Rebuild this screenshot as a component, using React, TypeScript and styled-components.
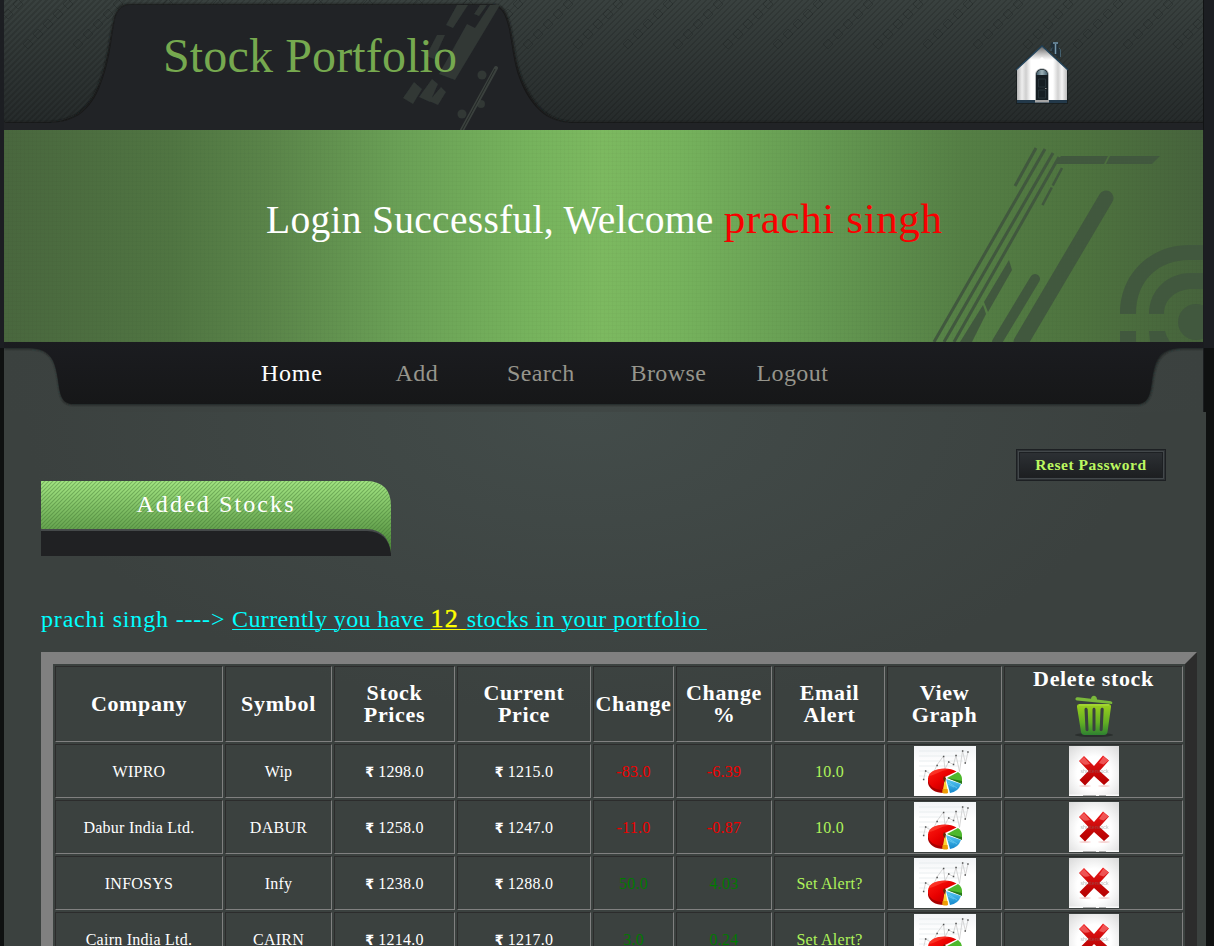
import React from "react";
import styled, { createGlobalStyle } from "styled-components";

const serif = `Georgia, "Liberation Serif", serif`;

const GlobalStyle = createGlobalStyle`
  html, body { margin: 0; height: 100%; background: #101212; overflow: hidden; }
  *, *::before, *::after { box-sizing: border-box; }
`;

const Page = styled.div`
  width: 1214px;
  height: 946px;
  overflow: hidden;
  padding-left: 4px;
  font-family: ${serif};
  color: #fff;
  background: linear-gradient(#1c1e22 0 348px, #0f1111 348px);
`;

const Header = styled.header`
  position: relative;
  width: 1200px;
  height: 130px;
  border-right: 1px solid #111314;
  background:
    repeating-linear-gradient(135deg, rgba(0, 0, 0, 0.13) 0 1.5px, transparent 1.5px 4.24px),
    linear-gradient(#39413f, #262b2b 122px);
`;

const HeaderArt = styled.svg`
  position: absolute;
  inset: 0;
`;

const HeaderRow = styled.div`
  position: relative;
  display: flex;
  justify-content: space-between;
  padding: 29px 130px 0 159px;
`;

const Title = styled.h1`
  margin: 0;
  font-size: 48px;
  font-weight: 400;
  line-height: 54px;
  letter-spacing: 0.15px;
  color: #76a94f;
`;

const HomeLink = styled.a`
  margin-top: 11px;
  height: 68px;
`;

const Banner = styled.section`
  position: relative;
  width: 1200px;
  height: 212px;
  padding: 60px 0 0 262px;
  border-right: 1px solid #1a1d1f;
  background:
    repeating-linear-gradient(90deg, rgba(0, 0, 0, 0.02) 0 1px, transparent 1px 4px),
    repeating-linear-gradient(0deg, rgba(0, 0, 0, 0.02) 0 1px, transparent 1px 4px),
    linear-gradient(90deg, #49673e 0, #507542 14%, #5a8449 22%, #6aa056 33%, #76b35d 44%, #7cb960 50%, #76b35d 56%, #659a52 68%, #557f45 80%, #4e733f 90%, #46633c 100%);
`;

const BannerArt = styled.svg`
  position: absolute;
  right: -1px;
  top: 0;
`;

const Welcome = styled.h2`
  position: relative;
  margin: 0;
  font-weight: 400;
  font-size: 39.5px;
  line-height: 58px;
  letter-spacing: 0.29px;
  white-space: pre;
`;

const UserName = styled.span`
  font-size: 43px;
  letter-spacing: 0.62px;
  color: #f80000;
`;

const NavBar = styled.nav`
  position: relative;
  width: 1200px;
  height: 70px;
  padding: 17px 0 0 257px;
  border-right: 1px solid #1a1d1f;
  background: linear-gradient(90deg, #3b413f, #404745 50%, #3b413f);
`;

const NavArt = styled.svg`
  position: absolute;
  inset: 0;
`;

const NavList = styled.ul`
  position: relative;
  display: grid;
  grid-template-columns: 134.5px 111.5px 123.5px 126px auto;
  margin: 0;
  padding: 0;
  list-style: none;
`;

const NavItem = styled.li<{ $active?: boolean }>`
  font-size: 24px;
  line-height: 28px;
  letter-spacing: ${(p) => (p.$active ? "0.75px" : "0.4px")};
  color: ${(p) => (p.$active ? "#fff" : "#96958c")};
`;

const Content = styled.main`
  width: 1202px;
  height: 534px;
  padding: 37px 0 0 37px;
  background: radial-gradient(ellipse 560px 300px at 580px 0, #434c4a, #3b413f);
`;

const ActionRow = styled.div`
  display: flex;
  justify-content: flex-end;
  padding-right: 40px;
`;

const ResetButton = styled.button`
  width: 150px;
  height: 32px;
  padding: 0;
  border: 1px solid #1d2023;
  outline: 1px solid #43484b;
  outline-offset: -3px;
  box-shadow: inset 0 0 0 1px #2e3235, inset 0 0 0 3px #1d2023;
  background: linear-gradient(#2e3236, #1b1d1f);
  color: #bcf860;
  font: bold 15.5px/28px ${serif};
  letter-spacing: 0.55px;
`;

const SectionTab = styled.h3`
  position: relative;
  width: 350px;
  height: 75px;
  margin: 0;
  padding-top: 9px;
  text-align: center;
  font-size: 24px;
  font-weight: 400;
  line-height: 28px;
  letter-spacing: 2.1px;
`;

const TabArt = styled.svg`
  position: absolute;
  inset: 0;
`;

const TabLabel = styled.span`
  position: relative;
`;

const Summary = styled.p`
  height: 29px;
  margin: 49px 0 18px;
  font-size: 24px;
  line-height: 29px;
  letter-spacing: 0.82px;
  color: #00ffff;
  white-space: pre;
`;

const SummaryLink = styled.span`
  letter-spacing: 0.38px;
  text-decoration: underline;
  text-decoration-thickness: 1px;
  text-underline-offset: 2px;
`;

const Count = styled.span`
  font-size: 26px;
  line-height: 20px;
  letter-spacing: 1.2px;
  color: #ffff00;
  text-decoration: underline;
  text-decoration-thickness: 1px;
  -webkit-text-stroke: 0.4px #ffff00;
`;

const StockTable = styled.table`
  width: 1156px;
  table-layout: fixed;
  border: 12px solid;
  border-color: #808080 #2c2c2c #2c2c2c #808080;
  border-collapse: separate;
  border-spacing: 2px;
`;

const cellBorder = `
  border: 1px solid;
  border-color: #2c2c2c #808080 #808080 #2c2c2c;
  text-align: center;
  vertical-align: middle;
`;

const HeadCell = styled.th`
  ${cellBorder}
  padding: 1px;
  height: 76px;
  font-size: 22px;
  line-height: 22px;
  letter-spacing: 0.65px;
`;

const DeleteHead = styled.div`
  display: flex;
  flex-direction: column;
  align-items: center;
  gap: 5px;
  height: 72px;
`;

const Cell = styled.td<{ $color?: string }>`
  ${cellBorder}
  padding: 3px 1px 1px;
  height: 54px;
  font-size: 16px;
  line-height: 18px;
  letter-spacing: 0.25px;
  color: ${(p) => p.$color || "#fff"};
`;

const PictureCell = styled.td`
  ${cellBorder}
  padding: 1px;
  height: 54px;

  svg { display: block; margin: 0 auto; }
`;

const Rupee = styled.span`
  font: 600 14px/16px "DejaVu Sans Condensed", "DejaVu Sans", sans-serif;
  letter-spacing: 0;
`;

const HouseIcon = () => (
  <svg width="64" height="68" viewBox="0 0 64 68">
    <defs>
      <linearGradient id="wall" x1="0" x2="1">
        <stop offset="0" stopColor="#b4b4b4" /><stop offset=".1" stopColor="#eee" />
        <stop offset=".18" stopColor="#cfcfcf" /><stop offset=".28" stopColor="#fff" />
        <stop offset=".72" stopColor="#fff" /><stop offset=".82" stopColor="#d2d2d2" />
        <stop offset=".9" stopColor="#f4f4f4" /><stop offset="1" stopColor="#bdbdbd" />
      </linearGradient>
      <linearGradient id="shade" x1="0" x2="0" y1="0" y2="1">
        <stop offset="0" stopColor="#222" stopOpacity=".75" /><stop offset=".4" stopColor="#555" stopOpacity="0" />
      </linearGradient>
      <linearGradient id="glass" x1="0" x2="1">
        <stop offset="0" stopColor="#3f5b69" /><stop offset=".5" stopColor="#9fb3ba" /><stop offset="1" stopColor="#3f5b69" />
      </linearGradient>
    </defs>
    <path d="M42 8c-1-3 0-6 2-6h4c2 1 2 3 1 5l2 4v8l-9-8z" fill="#202e37" />
    <path d="M44 3h5M46.500 4v10" stroke="#7598ad" strokeWidth="1.5" />
    <path d="M43.500 8q-2 1-1.500 3M50 8q2 1 1.500 4v5" fill="none" stroke="#44606f" />
    <path d="M7 29 33 5 59 29v35H7z" fill="#111719" opacity=".6" />
    <path d="M8 29 33 6l25 23v32H8z" fill="url(#wall)" />
    <path d="M8 29 33 6l25 23v12L33 17 8 41z" fill="url(#shade)" />
    <path d="M7 30 33 6l26 24" fill="none" stroke="#24455c" strokeWidth="1.4" />
    <path d="M8 60h50v3H8z" fill="#23394a" />
    <path d="M26 61V35c0-9 14-9 14 0v26z" fill="#b5b9bb" />
    <path d="M27 60V35c0-8 12-8 12 0v25z" fill="#161e23" />
    <path d="M27.500 35c0-7 11-7 11 0z" fill="url(#glass)" />
    <path d="M29.500 39h7v8h-7zM29.500 50h7v8h-7z" fill="none" stroke="#2b373e" strokeWidth=".8" />
    <path d="M36 48.500h1.500" stroke="#8b8b8b" />
    <path d="M26 60h14v2.500H26z" fill="#a5a5a5" />
  </svg>
);

const TrashIcon = () => (
  <svg width="40" height="43" viewBox="0 0 40 43">
    <defs>
      <linearGradient id="bin" x1="0" x2="0" y1="0" y2="1">
        <stop offset="0" stopColor="#9bd01d" /><stop offset=".6" stopColor="#62ae24" /><stop offset="1" stopColor="#2e8131" />
      </linearGradient>
    </defs>
    <ellipse cx="20" cy="40" rx="19" ry="2" fill="#2a2f2d" />
    <path d="M1.500 3.500Q2 2 4 2.300L17 3.700c.3-4 6-4 6 .7l14 1.800q2 .8 1 2.800L3 5.500q-2-.5-1.500-2z" fill="#7ab83b" />
    <path fillRule="evenodd" d="M3 12q-.4-3 3-3h28q3.300 0 3 3l-3.500 25q-.5 3-3.500 3H10.500q-3 0-3.500-3zM10.500 14.500l1 20c.2 2.300 3.200 2.300 3 0l-.8-20c-.2-2.200-3.200-2.200-3.200 0zm8 0v20c0 2.200 3 2.200 3 0v-20c0-2.200-3-2.200-3 0zm8 0-.8 20c-.2 2.300 2.800 2.300 3 0l1-20c.2-2.200-3-2.200-3.200 0z" fill="url(#bin)" />
    <path d="M5 10h30" stroke="#a9da45" />
  </svg>
);

const GraphIcon = () => (
  <svg width="62" height="50" viewBox="0 0 62 50">
    <defs>
      <linearGradient id="sheet" x1="0" x2="0" y1="0" y2="1"><stop offset="0" stopColor="#f2f4f6" /><stop offset=".35" stopColor="#fff" /></linearGradient>
      <linearGradient id="redSlice" x1="0" x2="1" y1="0" y2="1"><stop offset="0" stopColor="#ff1d12" /><stop offset=".5" stopColor="#e80000" /><stop offset="1" stopColor="#a70000" /></linearGradient>
      <linearGradient id="blueSlice" x1="0" x2="0" y1="0" y2="1"><stop offset="0" stopColor="#58c9f4" /><stop offset="1" stopColor="#1387cb" /></linearGradient>
    </defs>
    <path d="M0 0h62v50H0z" fill="url(#sheet)" />
    <path d="M5 5h48M5 10h48M5 15h44M5 20h40M5 25h10M5 30h8" stroke="#e3e8eb" strokeWidth=".7" />
    <path d="m9.500 34 2-9 7 4 4.500-10L29.500 10 31 23l3.500-7 5 2.500 2.500-9 3.500 16L48.500 5l3 12L54 6" fill="none" stroke="#c5c5c5" strokeWidth=".7" />
    <path d="M8.900 33.500h1.500M10.900 25h1.500M22.400 19.500h1.500M28.900 10.500h1.500M34 16h1.500M38.800 18.500h1.500M41.300 9.500h1.500M47.900 5h1.500M50.500 17h1.500M53.200 6h1.500" stroke="#525252" strokeWidth="1.500" />
    <path d="M14 32v5c1 6 7 10 16 10V34z" fill="#a80000" />
    <path d="M31 31 42.500 25.500C34 20 14 22 14 33c0 7 7 11 14.500 11z" fill="url(#redSlice)" />
    <path d="M15 30c2-7 13-8 20-6-7-1-13 5-20 6z" fill="#ff5140" opacity=".5" />
    <path d="m33 32 11-6q4 3 4 7v4z" fill="#4eb82c" /><path d="m33 32 15 3v3z" fill="#27791a" />
    <path d="m32 33 15 5q-3 8-11 9z" fill="url(#blueSlice)" />
    <path d="m34 38 6 3M34 36l9 6" stroke="#77d5f7" strokeWidth=".6" />
    <path d="m31 32-2.500 14.500q3 1 5.500 0z" fill="#ffd232" /><path d="M28.500 43v4q3 1 5.500 0l-.5-4z" fill="#ed9c05" />
    <path d="m30 30 2 2-1 5-2-4z" fill="#6d2507" />
  </svg>
);

const DeleteIcon = () => (
  <svg width="50" height="50" viewBox="0 0 50 50">
    <defs>
      <radialGradient id="paper" cx=".5" cy=".55" r=".75"><stop offset=".45" stopColor="#fff" /><stop offset="1" stopColor="#d8d8d8" /></radialGradient>
      <linearGradient id="cross" x1="0" x2="0" y1="0" y2="1"><stop offset="0" stopColor="#f01718" /><stop offset=".5" stopColor="#cb0b0b" /><stop offset="1" stopColor="#b40000" /></linearGradient>
    </defs>
    <path d="M0 0h50v50H0z" fill="url(#paper)" />
    <ellipse cx="16" cy="40" rx="6" ry=".8" fill="#f4c9c7" /><ellipse cx="35" cy="40" rx="6" ry=".8" fill="#f4c9c7" />
    <path d="m10 15 5-5 10 10 9-10.500 6 5L30.500 25l10 9-5.500 5-10-9-9 9.500-5.500-5.500 9-9z" fill="url(#cross)" />
    <path d="m10.500 15 4.500-4 6 7q-4 1-6 .5zM30 17l4.500-6.500 5 4-5 4z" fill="#f98b8a" opacity=".55" />
    <text x="25.500" y="27" textAnchor="middle" fontSize="5.200" fontFamily="Liberation Sans, sans-serif" fill="#777" opacity=".5">shutterstock</text>
    <path d="M0 48.500h50V50H0z" fill="#fafafa" /><path d="M14 49.500h13M30 49.500h7" stroke="#777" strokeWidth=".6" />
  </svg>
);

const HeaderTab = () => (
  <HeaderArt width="1199" height="130">
    <defs>
      <filter id="soft"><feGaussianBlur stdDeviation="1.300" /></filter>
      <filter id="worn"><feGaussianBlur stdDeviation=".7" /></filter>
      <pattern id="links" width="50" height="50" patternUnits="userSpaceOnUse" x="-18">
        <path d="m32-1 5 5-5 5-5-5zM22 9l5 5-5 5-5-5zM12 19l5 5-5 5-5-5zM2 29l5 5-5 5-5-5zM52 29l5 5-5 5-5-5zM42 39l5 5-5 5-5-5z" fill="none" stroke="#1d2322" strokeWidth=".7" opacity=".55" />
      </pattern>
    </defs>
    <path d="M0 0h1200v50H0z" fill="url(#links)" />
    <path d="M0 122H42c28 0 42-13 52-36 10-24 11-47 16-68q4-14 14-14H487c14 0 17 12 20 25 5 27 5 40 17 62 12 22 27 31 46 31h630v8H0z" fill="#151819" filter="url(#soft)" />
    <path d="M0 123H44c28 0 43-14 52-37 10-24 11-47 15-67q4-14 14-14H486c12 0 16 11 19 24 5 27 5 41 17 64 12 21 27 30 48 30h630v7H0z" fill="#212326" />
    <g fill="#303735" filter="url(#worn)">
      <path d="M453 5h11l-15 23-7-3zM476 5h7l-8 11-5-2zM486 5h10l-45 75-16-6 28-50 8 4zM433 35h8l-11 24-8-3zM410 82l8 7-9 15-10-6zM428 79l6 5-8 18-11-5zM437 87l5 5-8 13-9-4z" />
      <circle cx="478" cy="75" r="4.500" /><circle cx="477" cy="104" r="4" /><circle cx="458" cy="114" r="4.500" />
    </g>
    <path d="m492 68-34 62" stroke="#3b413e" strokeWidth="4" strokeLinecap="round" /><path d="m491 69-33 61" stroke="#242927" strokeWidth="1" />
  </HeaderArt>
);

const BannerShapes = () => (
  <BannerArt width="320" height="212" viewBox="884 0 320 212">
    <g stroke="#41583e" fill="none">
      <path d="m1036 18-21 38M1045 19 934 212M1053 23 944 212M1059 27 954 212" strokeWidth="3" />
      <path d="m1062 38-20 38" strokeWidth="2.500" strokeDasharray="20 2" />
      <path d="M1106 68 1021 212" strokeWidth="15" strokeLinecap="round" />
      <path d="M1035 149 997 212" strokeWidth="10" strokeLinecap="round" />
    </g>
    <g fill="#41583e">
      <path d="m1061 26h47l-4 8h-50zM1110 26h50l-8 8h-46zM1009 130l3 10-24 42-4-10zM983 175l3 9-14 28h-12z" />
      <path d="M1120 184c0-43 33-69 69-69h15v15h-15c-29 0-53 19-53 54zM1149 184c0-25 20-41 41-41h14v16h-12c-14 0-28 9-28 25zM1120 201h16v11h-16zM1149 201h16q1 5 5 11h-20z" />
      <circle cx="1196" cy="192" r="18" />
    </g>
    <path d="M1203 0h1v212h-1z" fill="#1a1d1f" />
  </BannerArt>
);

const NavShape = () => (
  <NavArt width="1199" height="70">
    <defs><linearGradient id="navFill" x1="0" x2="0" y1="0" y2="1"><stop offset="0" stopColor="#1b1c20" /><stop offset="1" stopColor="#161718" /></linearGradient></defs>
    <path d="M0 0h1200v7h-22c-22 1-26 12-29 32-2 16-4 24-18 24H70C57 63 56 54 54 39 51 19 48 8 26 7H0z" fill="#1c2020" filter="url(#soft)" />
    <path d="M0 0h1200v6h-24c-22 1-25 13-28 32-2 16-4 24-16 24H70C58 62 56 54 54 38 51 18 47 7 25 6H0z" fill="url(#navFill)" />
  </NavArt>
);

const TabShape = () => (
  <TabArt width="350" height="75">
    <defs>
      <linearGradient id="lime" x1="0" x2="0" y1="0" y2="1"><stop offset="0" stopColor="#a3e683" /><stop offset=".62" stopColor="#68a651" /><stop offset="1" stopColor="#437b32" /></linearGradient>
      <pattern id="hatch" width="4" height="4" patternUnits="userSpaceOnUse"><path d="M-1 1l2-2M0 4l4-4M3 5l2-2" stroke="#3a702c" strokeWidth="1.100" opacity=".42" /></pattern>
    </defs>
    <path d="M0 0h326q24 1 24 25v50H0z" fill="url(#lime)" />
    <path d="M0 0h326q24 1 24 25v50H0z" fill="url(#hatch)" />
    <path d="M0 48h326q22 1 24 25v2H0z" fill="#45494a" />
    <path d="M0 50h326q22 1 24 23v2H0z" fill="#202123" />
  </TabArt>
);

const columns = [168, 107, 121, 134, 81, 96, 111, 115, 179];
const headings = ["Company", "Symbol", "Stock\nPrices", "Current\nPrice", "Change", "Change\n%", "Email\nAlert", "View\nGraph"];
const stocks = [
  { company: "WIPRO", symbol: "Wip", price: "1298.0", current: "1215.0", change: "-83.0", percent: "-6.39", alert: "10.0" },
  { company: "Dabur India Ltd.", symbol: "DABUR", price: "1258.0", current: "1247.0", change: "-11.0", percent: "-0.87", alert: "10.0" },
  { company: "INFOSYS", symbol: "Infy", price: "1238.0", current: "1288.0", change: "50.0", percent: "4.03", alert: "Set Alert?" },
  { company: "Cairn India Ltd.", symbol: "CAIRN", price: "1214.0", current: "1217.0", change: "3.0", percent: "0.24", alert: "Set Alert?" },
];

const HeadLabel = styled.span`
  white-space: pre-line;
`;

export default function App() {
  return (
    <Page>
      <GlobalStyle />
      <Header>
        <HeaderTab />
        <HeaderRow>
          <Title>Stock Portfolio</Title>
          <HomeLink><HouseIcon /></HomeLink>
        </HeaderRow>
      </Header>
      <Banner>
        <BannerShapes />
        <Welcome>Login Successful, Welcome <UserName>prachi singh</UserName></Welcome>
      </Banner>
      <NavBar>
        <NavShape />
        <NavList>
          {["Home", "Add", "Search", "Browse", "Logout"].map((label, i) => (
            <NavItem key={label} $active={i === 0}>{label}</NavItem>
          ))}
        </NavList>
      </NavBar>
      <Content>
        <ActionRow><ResetButton>Reset Password</ResetButton></ActionRow>
        <SectionTab><TabShape /><TabLabel>Added Stocks</TabLabel></SectionTab>
        <Summary>
          {"prachi singh ----> "}
          <SummaryLink>Currently you have <Count>12 </Count>{"stocks in your portfolio "}</SummaryLink>
        </Summary>
        <StockTable>
          <colgroup>{columns.map((w, i) => <col key={i} width={w} />)}</colgroup>
          <thead>
            <tr>
              {headings.map((h) => <HeadCell key={h}><HeadLabel>{h}</HeadLabel></HeadCell>)}
              <HeadCell><DeleteHead>Delete stock<TrashIcon /></DeleteHead></HeadCell>
            </tr>
          </thead>
          <tbody>
            {stocks.map((s) => {
              const tone = s.change.startsWith("-") ? "#f00000" : "#007a00";
              return (
                <tr key={s.company}>
                  <Cell>{s.company}</Cell>
                  <Cell>{s.symbol}</Cell>
                  <Cell><Rupee>₹</Rupee> {s.price}</Cell>
                  <Cell><Rupee>₹</Rupee> {s.current}</Cell>
                  <Cell $color={tone}>{s.change}</Cell>
                  <Cell $color={tone}>{s.percent}</Cell>
                  <Cell $color="#aef35a">{s.alert}</Cell>
                  <PictureCell><GraphIcon /></PictureCell>
                  <PictureCell><DeleteIcon /></PictureCell>
                </tr>
              );
            })}
          </tbody>
        </StockTable>
      </Content>
    </Page>
  );
}
